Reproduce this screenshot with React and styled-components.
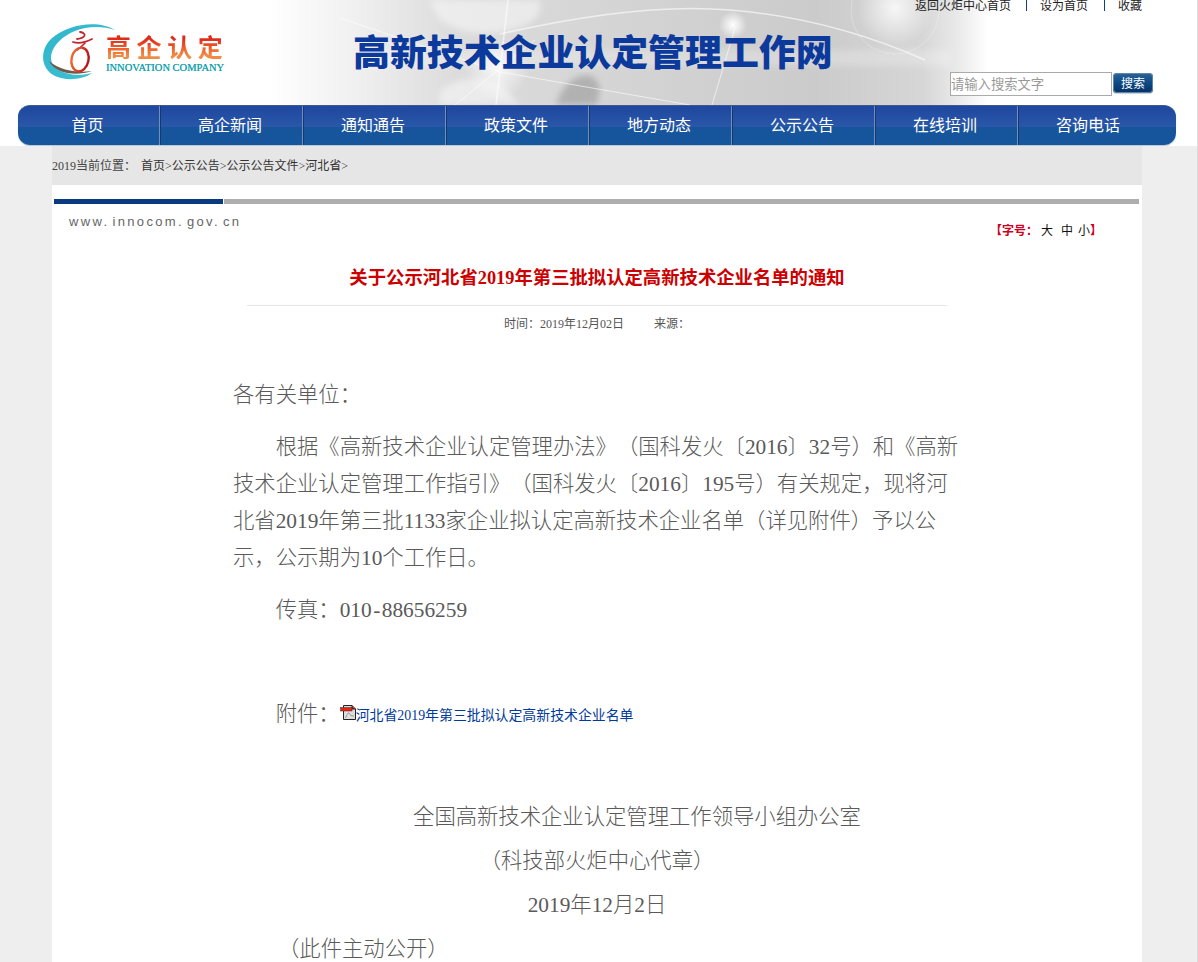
import React from 'react';
import styled, { createGlobalStyle } from 'styled-components';

const Global = createGlobalStyle`
  html, body { margin: 0; padding: 0; background: #eeeeee; }
  body {
    font-family: "Liberation Serif", "Noto Sans CJK SC", serif;
    text-spacing-trim: space-all; text-autospace: no-autospace; font-feature-settings: "chws" 0;
  }
  a { color: inherit; text-decoration: none; }
`;
const Page = styled.div`
  width: 1198px; height: 962px; overflow: hidden; box-sizing: border-box;
  border-right: 1px solid #dcdcdc; background: #eeeeee;
`;
const Header = styled.header`
  position: relative; height: 146px; background: #fff; overflow: hidden;
`;
const HeaderArt = styled.svg`
  position: absolute; left: 0; top: 0; width: 1198px; height: 105px;
`;
const HeaderTop = styled.div`
  position: relative; height: 105px; display: flex; box-sizing: border-box;
`;
const Logo = styled.div`
  display: flex; align-items: flex-start; margin: 21px 0 0 41px; width: 312px; flex: none;
`;
const LogoWords = styled.div`
  display: flex; flex-direction: column; margin: 13px 0 0 0;
`;
const LogoName = styled.span`
  font: 700 25px/25px "Noto Sans CJK SC", sans-serif; letter-spacing: 5.6px; width: 122px; white-space: nowrap;
  background: linear-gradient(#df2a1a 20%, #f0642d 60%, #f08a45 85%); -webkit-background-clip: text; background-clip: text; color: transparent;
`;
const LogoEn = styled.span`
  font: 10.5px/11px "Liberation Serif", serif; color: #19a3b0; white-space: nowrap; margin-top: 3px; width: 118px;
  text-shadow: 0 0 0.4px #19a3b0;
`;
const SiteTitle = styled.h1`
  margin: 29px 0 0; flex: none; width: 480px; color: #0c3a9c; white-space: nowrap;
  font: 900 36.9px/42px "Noto Sans CJK SC", sans-serif;
`;
const HeaderSide = styled.div`
  flex: 1; display: flex; flex-direction: column; align-items: flex-start; position: relative;
`;
const TopLinks = styled.div`
  display: flex; align-items: center; margin: -1px 0 0 82px; height: 12px; font: 12px/12px "Noto Sans CJK SC", sans-serif; color: #222;
`;
const TopLink = styled.a`
  display: block; white-space: nowrap;
`;
const TopSep = styled.i`
  display: block; width: 1px; height: 11px; background: #0a3d9c; margin: 0 ${p => p.$r}px 0 ${p => p.$l}px;
`;
const SearchRow = styled.form`
  display: flex; align-items: center; margin: 61px 0 0 117px; gap: 1px;
`;
const SearchInput = styled.div`
  width: 162px; height: 24px; box-sizing: border-box; border: 1px solid #aaaaaa; background: #fff; color: #999;
  font: 13.3px/21px "Noto Sans CJK SC", sans-serif;
`;
const SearchBtn = styled.button`
  width: 40px; height: 20px; border: 0; padding: 0; border-radius: 4px; color: #fff; margin-top: -3px;
  background: linear-gradient(#2f6397, #0b4a86 50%, #062f63); box-shadow: inset 0 0 0 1px #5f86ab, 0 1px 1px #c6ced8;
  font: 12px/19px "Noto Sans CJK SC", sans-serif;
`;
const Nav = styled.nav`
  position: relative; margin: 0 21px 0 18px; height: 40px; display: flex; box-sizing: border-box;
  border-radius: 12px; border-top: 1px solid #3c5a8c; box-shadow: 0 1px 1px #b9c3d2;
  background: linear-gradient(#1e479f 0, #2a58a9 54%, #17549b 55%, #15569c 100%);
  overflow: hidden;
`;
const NavItem = styled.a`
  flex: none; width: ${p => (p.$first ? 141 : 143)}px; height: 39px; display: flex; align-items: center; justify-content: center;
  color: #fff; font: 16px/18px "Noto Sans CJK SC", sans-serif; padding: 0 2px 3px 0; box-sizing: border-box;
  border-left: ${p => (p.$first ? '0' : '1px solid #6f8fbd')};
  box-shadow: ${p => (p.$first ? 'none' : 'inset 1px 0 0 #16386f')};
`;
const Main = styled.main`
  width: 1090px; margin: 0 0 0 52px; background: #fff; height: 816px;
`;
const Crumbs = styled.div`
  height: 39px; background: #e6e6e6; display: flex; align-items: center; font: 12px/16px "Liberation Serif", "Noto Sans CJK SC", serif; color: #333; white-space: nowrap;
`;
const CrumbLabel = styled.span`
  width: 89px; flex: none; color: #444;
`;
const BarRow = styled.div`
  display: flex; margin: 14px 3px 0 2px; height: 5px; gap: 1px;
`;
const BarSegment = styled.div`
  height: 5px; background: ${p => p.$c}; width: ${p => (p.$w ? p.$w + 'px' : 'auto')}; flex: ${p => (p.$w ? 'none' : 1)};
`;
const ToolRow = styled.div`
  display: flex; justify-content: space-between; align-items: flex-start; padding: 9px 40px 0 17px; height: 36px;
`;
const Domain = styled.span`
  font: 13px/17px "Liberation Sans", sans-serif; letter-spacing: 2.35px; color: #666; word-spacing: -3px; white-space: nowrap;
`;
const FontSizer = styled.div`
  margin-top: 9px; display: flex; gap: 8px; font: 12px/16px "Noto Sans CJK SC", sans-serif; color: #111; white-space: nowrap;
`;
const Red = styled.span`
  color: #cc0022; font-weight: 700; margin: ${p => (p.$end ? '0 0 0 -8px' : '0 -5px 0 0')};
`;
const SizeOpt = styled.a`
  display: block; margin-left: ${p => (p.$tight ? -3 : 0)}px;
`;
const Title = styled.h2`
  margin: 16px 0 0 195px; width: 700px; text-align: center; color: #cc0000; font: bold 18.35px/26px "Liberation Serif", "Noto Sans CJK SC", serif; white-space: nowrap; padding-bottom: 14px; border-bottom: 1px solid #e5e5e5;
`;
const Meta = styled.div`
  margin: 9px 0 0 195px; width: 700px; text-align: center; font: 12px/18px "Liberation Serif", "Noto Sans CJK SC", serif; color: #555; white-space: pre;
`;
const Article = styled.article`
  margin: 44px 0 0 181px; width: 728px; color: #5a5a5a; font: 300 21.33px/37px "Liberation Serif", "Noto Sans CJK SC", serif;
`;
const Para = styled.p`
  margin: 0 0 15px; text-indent: ${p => (p.$indent ? '2em' : 0)};
`;
const Spacer = styled.div`
  height: ${p => p.$h}px;
`;
const Signed = styled.p`
  margin: 0; line-height: 44px; text-align: ${p => (p.$left ? 'left' : 'center')};
  padding-left: ${p => p.$pad || 0}px;
`;
const Hyphen = styled.span`
  padding: 0 1.5px;
`;
const AttachLink = styled.a`
  font: 13.9px/20px "Liberation Serif", "Noto Sans CJK SC", serif; color: #003a9a; display: inline-flex; align-items: center; text-indent: 0; vertical-align: 0;
`;
const PdfIcon = styled.svg`
  width: 17px; height: 17px; margin: -6px -1px 0 0; flex: none;
`;

function Art() {
  return (
    <HeaderArt viewBox="0 0 1198 105">
      <defs>
        <linearGradient id="hg" x1="0" x2="1" y1="0" y2="0">
          <stop offset="0" stopColor="#fff" />
          <stop offset="0.225" stopColor="#fff" />
          <stop offset="0.3" stopColor="#efefef" />
          <stop offset="0.38" stopColor="#dcdcdc" />
          <stop offset="0.68" stopColor="#cbcbcb" />
          <stop offset="0.77" stopColor="#d6d6d6" />
          <stop offset="0.8" stopColor="#eaeaea" />
          <stop offset="0.825" stopColor="#fff" />
          <stop offset="1" stopColor="#fff" />
        </linearGradient>
        <radialGradient id="glow">
          <stop offset="0" stopColor="#fff" />
          <stop offset="1" stopColor="#fff" stopOpacity="0" />
        </radialGradient>
        <filter id="soft"><feGaussianBlur stdDeviation="3" /></filter>
        <filter id="soft1"><feGaussianBlur stdDeviation="0.7" /></filter>
      </defs>
      <rect width="1198" height="105" fill="url(#hg)" />
      <g fill="#ffffff" fillOpacity="0.45" filter="url(#soft)">
        <path d="M430 0 H 540 Q 545 22 510 30 Q 470 40 440 20 Z" />
        <path d="M440 92 Q 460 72 500 82 L 520 105 H 440 Z" />
        <path d="M360 50 H 950 V 66 H 360 Z" fillOpacity="0.22" />
      </g>
      <path d="M556 105 Q 565 76 588 75 Q 606 80 596 105 Z" fill="#a5a5a5" fillOpacity="0.75" filter="url(#soft)" />
      <g stroke="#ffffff" fill="none" strokeOpacity="0.6" filter="url(#soft1)">
        <path d="M500 34 Q 640 2 730 10 Q 830 18 925 60" strokeWidth="1.5" />
        <path d="M340 18 L 500 72 L 690 105" strokeWidth="1" />
        <path d="M508 0 L 496 105" strokeWidth="1.5" />
        <path d="M535 40 L 455 105" strokeWidth="1" />
        <path d="M735 28 L 712 105" strokeWidth="1" />
        <circle cx="895" cy="10" r="44" strokeOpacity="0.25" />
      </g>
      <circle cx="733" cy="25" r="14" fill="url(#glow)" />
      <circle cx="497" cy="68" r="32" fill="url(#glow)" fillOpacity="0.8" />
      <circle cx="895" cy="8" r="38" fill="url(#glow)" fillOpacity="0.8" />
    </HeaderArt>
  );
}

function LogoMark() {
  return (
    <svg width="65" height="60" viewBox="0 0 65 60" style={{ flex: 'none', overflow: 'visible' }}>
      <defs>
        <linearGradient id="ring" x1="0" x2="1" y1="0" y2="0.8">
          <stop offset="0" stopColor="#2fb4cc" />
          <stop offset="1" stopColor="#3ec2d2" />
        </linearGradient>
        <linearGradient id="fig" x1="0" x2="1" y1="0" y2="0">
          <stop offset="0" stopColor="#ef6a2c" />
          <stop offset="1" stopColor="#b5151f" />
        </linearGradient>
      </defs>
      <path d="M74 9 C 58 -1 28 2 10 18 C -2 30 0 48 14 55 C 24 60 42 59 51 52 C 40 55 24 55 14 46 C 4 36 14 18 34 10 C 46 5 62 5 74 9 Z" fill="url(#ring)" />
      <path d="M8 40 C 14 52 34 56 51 50 C 36 52 20 50 8 40 Z" fill="#6e5a4c" />
      <g fill="none" stroke="#c3232a" strokeLinecap="round">
        <path d="M39 11 C 46 12 45 17 36 18" strokeWidth="1.8" />
        <path d="M32 21 C 38 23 45 21 51 18" strokeWidth="1.8" />
        <path d="M44 22 C 41 25 39 27 36 29" strokeWidth="1.6" />
        <ellipse cx="39" cy="38.5" rx="8.5" ry="12" transform="rotate(12 39 38.5)" stroke="url(#fig)" strokeWidth="2.4" />
      </g>
    </svg>
  );
}

const navItems = ['首页', '高企新闻', '通知通告', '政策文件', '地方动态', '公示公告', '在线培训', '咨询电话'];

export default function App() {
  return (
    <Page>
      <Global />
      <Header>
        <Art />
        <HeaderTop>
          <Logo>
            <LogoMark />
            <LogoWords>
              <LogoName>高企认定</LogoName>
              <LogoEn>INNOVATION COMPANY</LogoEn>
            </LogoWords>
          </Logo>
          <SiteTitle>高新技术企业认定管理工作网</SiteTitle>
          <HeaderSide>
            <TopLinks>
              <TopLink href="#">返回火炬中心首页</TopLink>
              <TopSep $l={15} $r={13} />
              <TopLink href="#">设为首页</TopLink>
              <TopSep $l={16} $r={13} />
              <TopLink href="#">收藏</TopLink>
            </TopLinks>
            <SearchRow>
              <SearchInput>请输入搜索文字</SearchInput>
              <SearchBtn type="button">搜索</SearchBtn>
            </SearchRow>
          </HeaderSide>
        </HeaderTop>
        <Nav>
          {navItems.map((n, i) => (
            <NavItem key={n} href="#" $first={i === 0}>{n}</NavItem>
          ))}
        </Nav>
      </Header>
      <Main>
        <Crumbs>
          <CrumbLabel>2019当前位置：</CrumbLabel>
          首页&gt;公示公告&gt;公示公告文件&gt;河北省&gt;
        </Crumbs>
        <BarRow>
          <BarSegment $c="#0a3a80" $w={169} />
          <BarSegment $c="#aeaeae" />
        </BarRow>
        <ToolRow>
          <Domain>www. innocom. gov. cn</Domain>
          <FontSizer>
            <Red>【字号：</Red>
            <SizeOpt>大</SizeOpt>
            <SizeOpt>中</SizeOpt>
            <SizeOpt $tight>小</SizeOpt>
            <Red $end>】</Red>
          </FontSizer>
        </ToolRow>
        <Title>关于公示河北省2019年第三批拟认定高新技术企业名单的通知</Title>
        <Meta>时间：2019年12月02日          来源：</Meta>
        <Article>
          <Para>各有关单位：</Para>
          <Para $indent>根据《高新技术企业认定管理办法》（国科发火〔2016〕32号）和《高新技术企业认定管理工作指引》（国科发火〔2016〕195号）有关规定，现将河北省2019年第三批1133家企业拟认定高新技术企业名单（详见附件）予以公示，公示期为10个工作日。</Para>
          <Para $indent>传真：010<Hyphen>-</Hyphen>88656259</Para>
          <Spacer $h={52} />
          <Para $indent>
            附件：
            <AttachLink href="#">
              <PdfIcon viewBox="0 0 17 17">
                <path d="M3.5 1.5H12L15.5 5V15.5H3.5Z" fill="#dedede" stroke="#222" />
                <path d="M12 1.5V5H15.5" fill="#f02010" stroke="#222" />
                <rect x="0.5" y="3.5" width="11.5" height="3.5" fill="#f02010" stroke="#333" strokeWidth="0.5" />
                <path d="M5.5 14C7 11 8 8 9 9C10 11 11 12 14 12" fill="none" stroke="#999" />
              </PdfIcon>
              河北省2019年第三批拟认定高新技术企业名单
            </AttachLink>
          </Para>
          <Spacer $h={47} />
          <Signed $pad={80}>全国高新技术企业认定管理工作领导小组办公室</Signed>
          <Signed>（科技部火炬中心代章）</Signed>
          <Signed>2019年12月2日</Signed>
          <Signed $left $pad={45}>（此件主动公开）</Signed>
        </Article>
      </Main>
    </Page>
  );
}
